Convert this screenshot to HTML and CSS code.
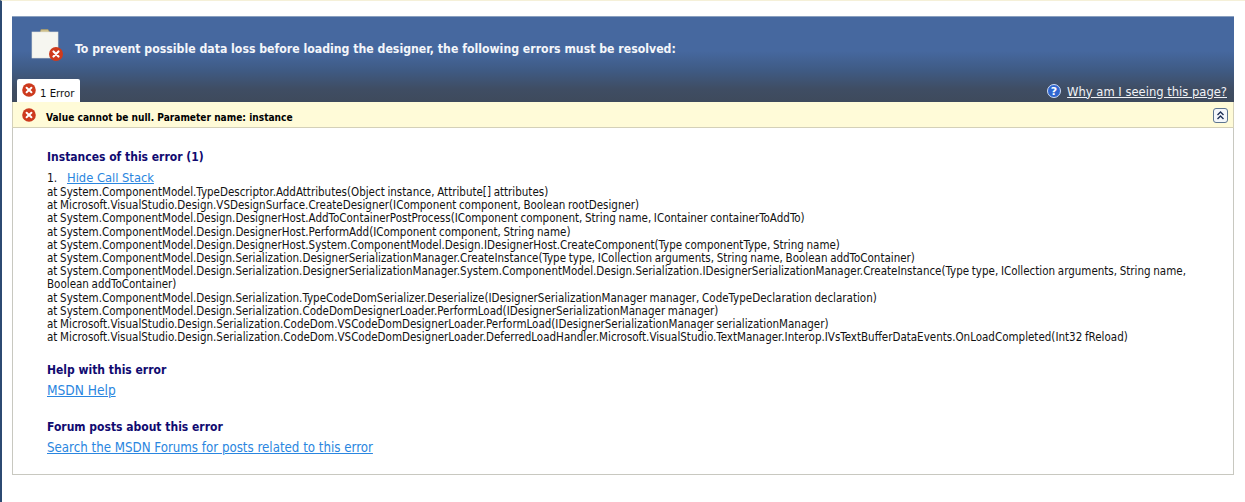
FILE: index.html
```html
<!DOCTYPE html>
<html lang="en">
<head>
<meta charset="utf-8">
<title>Designer errors</title>
<link rel="stylesheet" href="styles.css">
</head>
<body>
<div class="page">
  <div class="panel">
    <header class="banner">
      <div class="banner-top">
        <svg class="clip-icon" width="33" height="34" viewBox="0 0 33 34">
          <path d="M9 5 L10 1.500 H17 L19 5 Z" fill="#cfc08a" stroke="#a89a68" stroke-width=".7"/>
          <rect x="1" y="4" width="26" height="26" fill="#f6f6f0" stroke="#e4e4dc" stroke-width=".6"/>
          <circle cx="25" cy="26" r="7" fill="#cf3a1c"/>
          <path d="M22.500 23.500 L27.500 28.500 M27.500 23.500 L22.500 28.500" stroke="#fff" stroke-width="2.200" stroke-linecap="round"/>
        </svg>
        <h1 class="banner-title">To prevent possible data loss before loading the designer, the following errors must be resolved:</h1>
      </div>
      <div class="banner-tabs">
        <div class="tab">
          <svg class="err-icon" width="14" height="14" viewBox="0 0 14 14"><circle cx="7" cy="7" r="6.800" fill="#cd3a1e"/><path d="M4.600 4.800 L9.400 9.200 M9.400 4.800 L4.600 9.200" stroke="#fff" stroke-width="2" stroke-linecap="round"/></svg>
          <span>1 Error</span>
        </div>
        <div class="why">
          <svg width="14" height="14" viewBox="0 0 14 14"><circle cx="7" cy="7" r="6.500" fill="#2f66d0" stroke="#cfdcf4" stroke-width="1"/><text x="7" y="10.500" text-anchor="middle" class="q">?</text></svg>
          <a class="why-link" href="#">Why am I seeing this page?</a>
        </div>
      </div>
    </header>
    <div class="msgbar">
      <svg class="err-icon" width="14" height="14" viewBox="0 0 14 14"><circle cx="7" cy="7" r="6.800" fill="#cd3a1e"/><path d="M4.600 4.800 L9.400 9.200 M9.400 4.800 L4.600 9.200" stroke="#fff" stroke-width="2" stroke-linecap="round"/></svg>
      <strong class="msg">Value cannot be null. Parameter name: instance</strong>
      <svg class="collapse" width="15" height="15" viewBox="0 0 15 15"><rect x=".5" y=".5" width="14" height="14" rx="2.500" fill="#f4f7fb" stroke="#5d7590"/><path d="M4.500 7 L7.500 4 L10.500 7 M4.500 11 L7.500 8 L10.500 11" fill="none" stroke="#1c2f55" stroke-width="1.400"/></svg>
    </div>
    <main class="content">
      <section class="sec-first">
        <h2 class="sec-head">Instances of this error (1)</h2>
        <div class="num-row"><span class="num">1.</span><a class="link link-hide" href="#">Hide Call Stack</a></div>
        <div class="stack">
          <div>at System.ComponentModel.TypeDescriptor.AddAttributes(Object instance, Attribute[] attributes)</div>
          <div>at Microsoft.VisualStudio.Design.VSDesignSurface.CreateDesigner(IComponent component, Boolean rootDesigner)</div>
          <div>at System.ComponentModel.Design.DesignerHost.AddToContainerPostProcess(IComponent component, String name, IContainer containerToAddTo)</div>
          <div>at System.ComponentModel.Design.DesignerHost.PerformAdd(IComponent component, String name)</div>
          <div>at System.ComponentModel.Design.DesignerHost.System.ComponentModel.Design.IDesignerHost.CreateComponent(Type componentType, String name)</div>
          <div>at System.ComponentModel.Design.Serialization.DesignerSerializationManager.CreateInstance(Type type, ICollection arguments, String name, Boolean addToContainer)</div>
          <div>at System.ComponentModel.Design.Serialization.DesignerSerializationManager.System.ComponentModel.Design.Serialization.IDesignerSerializationManager.CreateInstance(Type type, ICollection arguments, String name, Boolean addToContainer)</div>
          <div>at System.ComponentModel.Design.Serialization.TypeCodeDomSerializer.Deserialize(IDesignerSerializationManager manager, CodeTypeDeclaration declaration)</div>
          <div>at System.ComponentModel.Design.Serialization.CodeDomDesignerLoader.PerformLoad(IDesignerSerializationManager manager)</div>
          <div>at Microsoft.VisualStudio.Design.Serialization.CodeDom.VSCodeDomDesignerLoader.PerformLoad(IDesignerSerializationManager serializationManager)</div>
          <div>at Microsoft.VisualStudio.Design.Serialization.CodeDom.VSCodeDomDesignerLoader.DeferredLoadHandler.Microsoft.VisualStudio.TextManager.Interop.IVsTextBufferDataEvents.OnLoadCompleted(Int32 fReload)</div>
        </div>
      </section>
      <section class="sec-help">
        <h2 class="sec-head">Help with this error</h2>
        <a class="link link-msdn" href="#">MSDN Help</a>
      </section>
      <section class="sec-forum">
        <h2 class="sec-head">Forum posts about this error</h2>
        <a class="link" href="#">Search the MSDN Forums for posts related to this error</a>
      </section>
    </main>
  </div>
</div>
</body>
</html>
```
FILE: styles.css
```css
* { box-sizing: border-box; }
html, body { margin: 0; height: 100%; overflow: hidden; }
body {
  background: #fff;
  font-family: "DejaVu Sans Condensed", "DejaVu Sans", sans-serif;
  color: #000;
}
.page {
  height: 502px;
  padding: 15px 11px 0 10px;
  border-left: 2px solid #2c4a72;
  border-top: 1px solid #f5f0d8;
}
.panel { width: 1222px; }
.banner {
  height: 86px;
  background: linear-gradient(#46689f 0, #46689f 40%, #3f5b85 62%, #3f4d63 85%, #3e4a5c 100%);
  border-top: 1px solid #8aa0c0;
  display: flex;
  flex-direction: column;
  justify-content: space-between;
}
.banner-top { display: flex; align-items: flex-start; padding: 11px 0 0 19px; }
.clip-icon { display: block; flex: none; }
.banner-title {
  margin: 13px 0 0 11px;
  font-size: 12.200px;
  line-height: 16px;
  font-weight: bold;
  color: #f4f6fa;
}
.banner-tabs { display: flex; justify-content: space-between; align-items: flex-end; padding: 0 7px 0 5px; }
.tab {
  width: 63px;
  height: 23px;
  background: #fff;
  border-radius: 2px 2px 0 0;
  display: flex;
  padding: 4px 0 0 5px;
  font-size: 11.300px;
  line-height: 16px;
  color: #111;
}
.tab span { margin: 3px 0 0 4px; }
.err-icon { display: block; flex: none; }
.why { display: flex; align-items: center; gap: 6px; height: 20px; padding-bottom: 3px; }
.q { font: bold 11px "DejaVu Sans", sans-serif; fill: #fff; }
.why-link { color: #f0f2f6; font-size: 12.850px; line-height: 16px; text-decoration: underline; margin-top: 2px; }
.msgbar {
  height: 26px;
  background: #fffbd8;
  border-bottom: 1px solid #d4d0b8;
  border-left: 1px solid #d4d0b8;
  border-right: 1px solid #d4d0b8;
  display: flex;
  align-items: center;
  padding: 0 5px 0 9px;
}
.msgbar .err-icon { margin: 0; }
.msg { margin-left: 10px; font-size: 10.100px; flex: 1; padding-top: 6px; }
.collapse { display: block; flex: none; margin-top: 1px; }
.content {
  height: 347px;
  background: #fff;
  border: 1px solid #c8c8c0;
  border-top: 0;
  padding: 0 0 0 34px;
}
.sec-head {
  margin: 0;
  font-size: 12px;
  line-height: 16px;
  font-weight: bold;
  color: #100a70;
}
.sec-first { padding-top: 21px; }
.num-row { margin-top: 5px; display: flex; font-size: 12px; line-height: 16px; color: #111; }
.num { width: 20px; }
.link { color: #2a86e0; font-size: 13.200px; line-height: 16px; text-decoration: underline; display: inline-block; }
.link-hide { font-size: 12.800px; }
.link-msdn { font-size: 13.600px; }
.stack { font-size: 11.500px; line-height: 13.200px; word-spacing: -0.6px; color: #111; padding-right: 40px; }
.sec-help { padding-top: 18px; }
.sec-help .link { margin-top: 4px; }
.sec-forum .link { margin-top: 5px; }
.sec-forum { padding-top: 20px; }
```
